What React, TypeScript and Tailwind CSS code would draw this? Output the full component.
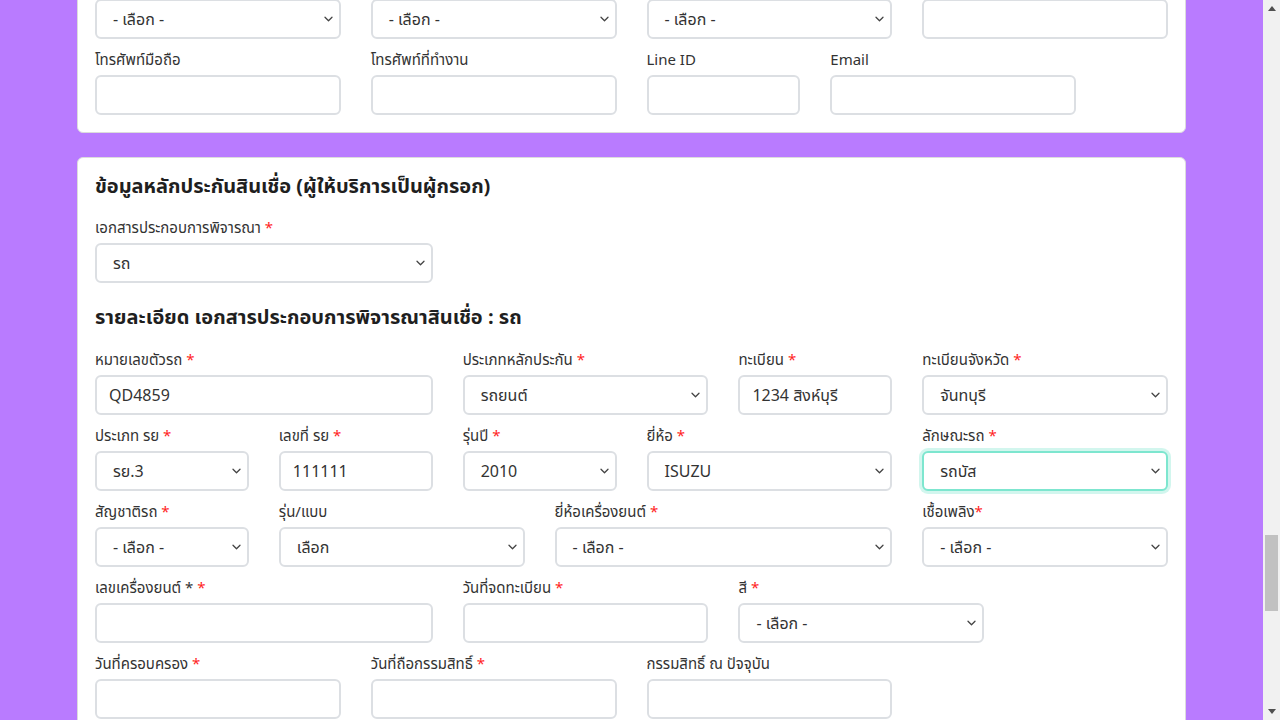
import React from "react";

type FieldProps = {
  span: 2 | 3 | 4;
  label?: string;
  req?: boolean;
  reqNoSpace?: boolean;
  kind: "select" | "input";
  value?: string;
  focused?: boolean;
};

const spanClass: Record<number, string> = {
  2: "col-span-2",
  3: "col-span-3",
  4: "col-span-4",
};

function Chevron() {
  return (
    <svg width="9" height="6" viewBox="0 0 9 6" fill="none" className="shrink-0">
      <path d="M1 1.2l3.5 3.5 3.5-3.5" stroke="#444" strokeWidth="1.3" strokeLinecap="round" strokeLinejoin="round" />
    </svg>
  );
}

function Field({ span, label, req, reqNoSpace, kind, value, focused }: FieldProps) {
  const base =
    "flex h-10 items-center rounded-md border-2 bg-white text-[16px] text-[#333]";
  const border = focused
    ? "border-[#7de6cf] shadow-[0_0_0_3px_rgba(125,230,207,0.35)]"
    : "border-[#dcdfe3]";
  return (
    <div className={spanClass[span]}>
      {label !== undefined && (
        <div className="mb-1 text-[15px] leading-[20px] text-[#333]">
          {label}
          {req && <span className="text-[#ff1f1f]">{reqNoSpace ? "*" : " *"}</span>}
        </div>
      )}
      {kind === "select" ? (
        <div className={`${base} ${border} justify-between pl-4 pr-[6px]`}>
          <span className="pt-[1px]">{value}</span>
          <Chevron />
        </div>
      ) : (
        <div className={`${base} ${border} px-3`}>
          <span className="pt-[1px]">{value ?? ""}</span>
        </div>
      )}
    </div>
  );
}

function Row({ children, first }: { children: React.ReactNode; first?: boolean }) {
  return <div className={`grid grid-cols-12 gap-x-[30px] ${first ? "" : "mt-3"}`}>{children}</div>;
}

const SEL = "- เลือก -";

export default function App() {
  return (
    <div className="flex h-[720px] w-[1280px] overflow-hidden bg-[#b97bff] font-['Noto_Sans_Thai','Noto_Sans',sans-serif]">
      <div className="flex-1 overflow-hidden">
        <div className="mx-[77px]">
          {/* Card 1 (partially scrolled off) */}
          <div className="mt-[-19px] rounded-md border border-[#dcdcdc] bg-white px-[17px] pb-[17px] pt-[17px]">
            <Row first>
              <Field span={3} kind="select" value={SEL} />
              <Field span={3} kind="select" value={SEL} />
              <Field span={3} kind="select" value={SEL} />
              <Field span={3} kind="input" />
            </Row>
            <Row>
              <Field span={3} label="โทรศัพท์มือถือ" kind="input" />
              <Field span={3} label="โทรศัพท์ที่ทำงาน" kind="input" />
              <Field span={2} label="Line ID" kind="input" />
              <Field span={3} label="Email" kind="input" />
            </Row>
          </div>

          {/* Card 2 */}
          <div className="mt-[24px] rounded-md border border-[#dcdcdc] bg-white px-[17px] pb-[17px] pt-[17px]">
            <h2 className="text-[20px] font-bold leading-[24px] text-[#1f1f1f]">
              ข้อมูลหลักประกันสินเชื่อ (ผู้ให้บริการเป็นผู้กรอก)
            </h2>
            <div className="mt-[20px]">
              <Row first>
                <Field span={4} label="เอกสารประกอบการพิจารณา" req kind="select" value="รถ" />
              </Row>
            </div>
            <h3 className="mt-[23px] text-[20px] font-bold leading-[24px] text-[#1f1f1f]">
              รายละเอียด เอกสารประกอบการพิจารณาสินเชื่อ : รถ
            </h3>
            <div className="mt-[21px]">
              <Row first>
                <Field span={4} label="หมายเลขตัวรถ" req kind="input" value="QD4859" />
                <Field span={3} label="ประเภทหลักประกัน" req kind="select" value="รถยนต์" />
                <Field span={2} label="ทะเบียน" req kind="input" value="1234 สิงห์บุรี" />
                <Field span={3} label="ทะเบียนจังหวัด" req kind="select" value="จันทบุรี" />
              </Row>
              <Row>
                <Field span={2} label="ประเภท รย" req kind="select" value="รย.3" />
                <Field span={2} label="เลขที่ รย" req kind="input" value="111111" />
                <Field span={2} label="รุ่นปี" req kind="select" value="2010" />
                <Field span={3} label="ยี่ห้อ" req kind="select" value="ISUZU" />
                <Field span={3} label="ลักษณะรถ" req kind="select" value="รถบัส" focused />
              </Row>
              <Row>
                <Field span={2} label="สัญชาติรถ" req kind="select" value={SEL} />
                <Field span={3} label="รุ่น/แบบ" kind="select" value="เลือก" />
                <Field span={4} label="ยี่ห้อเครื่องยนต์" req kind="select" value={SEL} />
                <Field span={3} label="เชื้อเพลิง" req reqNoSpace kind="select" value={SEL} />
              </Row>
              <Row>
                <Field span={4} label="เลขเครื่องยนต์ *" req kind="input" />
                <Field span={3} label="วันที่จดทะเบียน" req kind="input" />
                <Field span={3} label="สี" req kind="select" value={SEL} />
              </Row>
              <Row>
                <Field span={3} label="วันที่ครอบครอง" req kind="input" />
                <Field span={3} label="วันที่ถือกรรมสิทธิ์" req kind="input" />
                <Field span={3} label="กรรมสิทธิ์ ณ ปัจจุบัน" kind="input" />
              </Row>
            </div>
          </div>
        </div>
      </div>

      {/* Scrollbar */}
      <div className="flex w-[17px] flex-col bg-[#f1f1f1]">
        <div className="flex h-[17px] items-center justify-center">
          <svg width="8" height="5" viewBox="0 0 8 5">
            <path d="M0 5L4 0L8 5Z" fill="#505050" />
          </svg>
        </div>
        <div className="flex-1 pt-[518px]">
          <div className="mx-[2px] h-[76px] bg-[#c1c1c1]" />
        </div>
        <div className="flex h-[17px] items-center justify-center">
          <svg width="8" height="5" viewBox="0 0 8 5">
            <path d="M0 0L8 0L4 5Z" fill="#505050" />
          </svg>
        </div>
      </div>
    </div>
  );
}
